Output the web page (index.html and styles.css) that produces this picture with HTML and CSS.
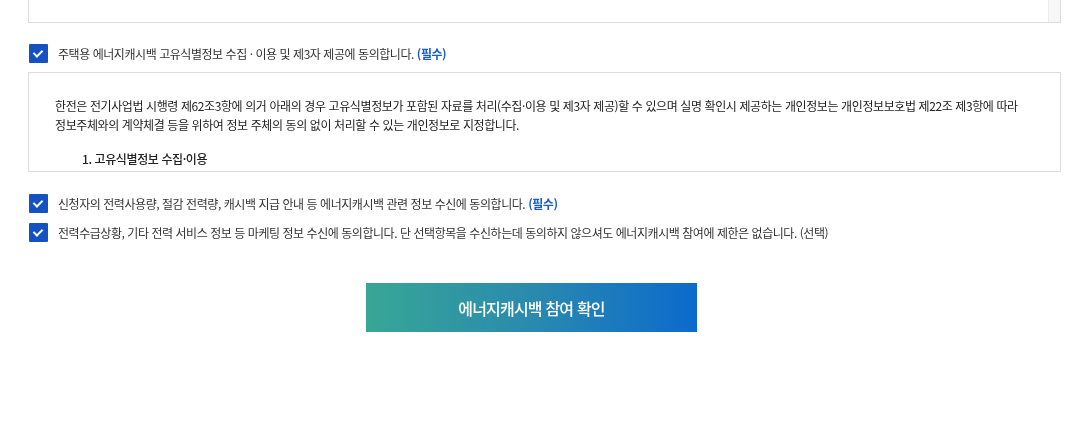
FILE: index.html
```html
<!DOCTYPE html>
<html lang="ko">
<head>
    <meta charset="UTF-8">
    <meta name="viewport" content="width=device-width, initial-scale=1.0">
    <title>에너지캐시백 참여 동의</title>
    <link rel="stylesheet" href="styles.css">
</head>
<body>
    <div id="container">
        <!-- previous terms box, scrolled mostly out of view -->
        <div class="terms-box terms-prev">
            <div class="terms-inner"></div>
        </div>

        <label class="agree first">
            <input type="checkbox" checked>
            <span class="check"></span>
            <span class="agree-text">주택용 에너지캐시백 고유식별정보 수집 · 이용 및 제3자 제공에 동의합니다. <b class="req">(필수)</b></span>
        </label>

        <div class="terms-box terms-scroll">
            <p>한전은 전기사업법 시행령 제62조3항에 의거 아래의 경우 고유식별정보가 포함된 자료를 처리(수집·이용 및 제3자 제공)할 수 있으며 실명 확인시 제공하는 개인정보는 개인정보보호법 제22조 제3항에 따라 정보주체와의 계약체결 등을 위하여 정보 주체의 동의 없이 처리할 수 있는 개인정보로 지정합니다.</p>
            <ol>
                <li>1. 고유식별정보 수집·이용
                    <ul>
                        <li>- 수집·이용 목적 : 에너지캐시백 참여자 본인 확인</li>
                        <li>- 수집 항목 : 주민등록번호</li>
                        <li>- 보유·이용 기간 : 참여 종료 후 5년</li>
                    </ul>
                </li>
                <li>2. 고유식별정보 제3자 제공
                    <ul>
                        <li>- 제공받는 자 : 한국에너지공단</li>
                        <li>- 제공 목적 : 에너지캐시백 지급</li>
                    </ul>
                </li>
            </ol>
        </div>

        <label class="agree second">
            <input type="checkbox" checked>
            <span class="check"></span>
            <span class="agree-text">신청자의 전력사용량, 절감 전력량, 캐시백 지급 안내 등 에너지캐시백 관련 정보 수신에 동의합니다. <b class="req">(필수)</b></span>
        </label>

        <label class="agree">
            <input type="checkbox" checked>
            <span class="check"></span>
            <span class="agree-text">전력수급상황, 기타 전력 서비스 정보 등 마케팅 정보 수신에 동의합니다. 단 선택항목을 수신하는데 동의하지 않으셔도 에너지캐시백 참여에 제한은 없습니다. (선택)</span>
        </label>

        <div class="btn-area">
            <button type="button" class="btn-submit">에너지캐시백 참여 확인</button>
        </div>
    </div>
</body>
</html>
```

FILE: styles.css
```css
body {
    margin: 0;
    padding: 0;
    background-color: #fff;
    color: #333;
    font-family: "Noto Sans CJK KR", "Noto Sans", sans-serif;
    font-size: 12px;
}

#container {
    width: 1063px;
}

.terms-box {
    box-sizing: border-box;
    width: 1033px;
    margin-left: 28px;
    border: 1px solid #dcdcdc;
    background-color: #fff;
}

.terms-prev {
    height: 23px;
    border-top: none;
    display: flex;
    justify-content: flex-end;
}

.terms-prev .terms-inner {
    width: 11px;
    background-color: #f7f7f7;
    border-left: 1px solid #ececec;
}

.terms-scroll {
    height: 100px;
    margin-top: 9px;
    overflow-y: scroll;
    padding: 23px 30px 0 26px;
    font-size: 12px;
    line-height: 19px;
    letter-spacing: -0.4px;
    color: #222;
}

.terms-scroll::-webkit-scrollbar {
    width: 12px;
}

.terms-scroll::-webkit-scrollbar-track {
    background-color: #f7f7f7;
    border-left: 1px solid #ececec;
}

.terms-scroll::-webkit-scrollbar-thumb {
    background-color: #c4c4c4;
    border-radius: 4px;
    border: 3px solid #f7f7f7;
    border-top-width: 2px;
    min-height: 20px;
}

.terms-scroll p {
    margin: 0 0 15px;
}

.terms-scroll ol,
.terms-scroll ul {
    list-style: none;
    margin: 0;
    padding: 0 0 0 27px;
}

.terms-scroll ul {
    margin: 14px 0;
}

.terms-scroll ol > li {
    font-weight: 500;
}

.terms-scroll ul li {
    font-weight: 400;
}

.agree {
    display: flex;
    align-items: center;
    margin-left: 29px;
    height: 19px;
    margin-top: 10px;
    cursor: pointer;
}

.agree.first {
    margin-top: 21px;
}

.agree.second {
    margin-top: 22px;
}

.agree input {
    display: none;
}

.check {
    position: relative;
    flex: none;
    width: 19px;
    height: 19px;
    background-color: #1452c4;
    border-radius: 1px;
}

.check::after {
    content: "";
    position: absolute;
    left: 6px;
    top: 4px;
    width: 4px;
    height: 7px;
    border: solid #fff;
    border-width: 0 2px 2px 0;
    transform: rotate(45deg);
}

.agree-text {
    margin-left: 10px;
    color: #333;
    letter-spacing: -0.45px;
}

.req {
    color: #1a5cc8;
    font-weight: 700;
}

.btn-area {
    display: flex;
    justify-content: center;
    margin-top: 41px;
}

.btn-submit {
    width: 331px;
    height: 49px;
    border: none;
    background: linear-gradient(90deg, #37a796 0%, #2a8aae 50%, #0b6acd 100%);
    color: #fff;
    font-family: "Noto Sans CJK KR", "Noto Sans", sans-serif;
    font-size: 16px;
    font-weight: 500;
    letter-spacing: -0.8px;
    cursor: pointer;
}
```
